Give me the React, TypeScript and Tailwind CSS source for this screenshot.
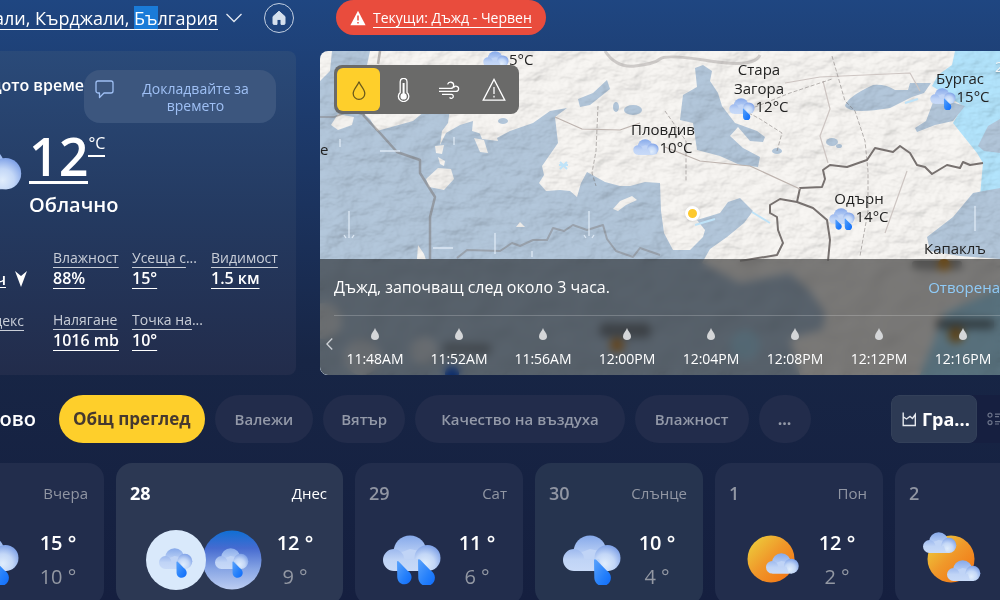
import React, { useState } from "react";

type IconProps = { className?: string };

const CloudShape = () => (
  <>
    <circle cx="27" cy="17" r="16.5" fill="url(#cloudBack)" />
    <path d="M11 20L27 14L46 18V36H11z" fill="#c0d4f6" />
    <circle cx="44.5" cy="23" r="13" fill="url(#cloudRight)" />
    <path d="M11 14A11 11 0 0 0 11 36H40L36 24H21.5A11 11 0 0 0 11 14z" fill="url(#cloudLeft)" />
  </>
);

const Drop = ({ transform }: { transform?: string }) => (
  <path
    transform={transform}
    d="M0 1.5C0 0 1.2-.3 2.2.8L12.6 11.5A8.3 8.3 0 1 1 .3 19z"
    fill="url(#drop)"
  />
);

const CloudIcon = ({ className }: IconProps) => (
  <svg className={className} viewBox="0 0 58 50">
    <CloudShape />
  </svg>
);

const RainIcon = ({ className }: IconProps) => (
  <svg className={className} viewBox="0 0 58 50">
    <CloudShape />
    <Drop transform="translate(31 24)" />
  </svg>
);

const HeavyRainIcon = ({ className }: IconProps) => (
  <svg className={className} viewBox="0 0 58 50">
    <CloudShape />
    <Drop transform="translate(14 26) scale(.86)" />
    <Drop transform="translate(35 24)" />
  </svg>
);

const PartlySunnyIcon = ({ className }: IconProps) => (
  <svg className={className} viewBox="0 0 58 56">
    <circle cx="28" cy="27" r="23.5" fill="url(#sun)" />
    <g transform="translate(23 21) scale(.57)">
      <CloudShape />
    </g>
  </svg>
);

const MostlyCloudyIcon = ({ className }: IconProps) => (
  <svg className={className} viewBox="0 0 58 56">
    <circle cx="28" cy="27" r="23.5" fill="url(#sun)" />
    <g transform="scale(.58)">
      <CloudShape />
    </g>
    <g transform="translate(24 28) scale(.58)">
      <CloudShape />
    </g>
  </svg>
);

const DayNightIcon = ({ className }: IconProps) => (
  <svg className={className} viewBox="0 0 116 60">
    <circle cx="86" cy="30" r="29.5" fill="url(#night)" />
    <circle cx="30" cy="30" r="30" fill="#d9e9fb" />
    <g transform="translate(13 18) scale(.58)">
      <CloudShape />
      <Drop transform="translate(30 23) scale(1.05)" />
    </g>
    <g transform="translate(69 18) scale(.58)">
      <CloudShape />
      <Drop transform="translate(30 23) scale(1.05)" />
    </g>
  </svg>
);

const Gradients = () => (
  <svg className="absolute h-0 w-0" aria-hidden="true">
    <defs>
      <linearGradient id="cloudBack" x1="0" y1="0" x2="0" y2="1">
        <stop offset="0" stopColor="#86a9ea" />
        <stop offset=".6" stopColor="#bdd2f6" />
        <stop offset="1" stopColor="#c3d6f6" />
      </linearGradient>
      <linearGradient id="cloudLeft" x1="0" y1="0" x2="0" y2="1">
        <stop offset="0" stopColor="#9db9ee" />
        <stop offset=".5" stopColor="#c0d4f6" />
        <stop offset="1" stopColor="#c8daf8" />
      </linearGradient>
      <radialGradient id="cloudRight" cx=".4" cy=".72" r=".75">
        <stop offset="0" stopColor="#e0edfc" />
        <stop offset=".5" stopColor="#c3d7f7" />
        <stop offset="1" stopColor="#7b9ee6" />
      </radialGradient>
      <linearGradient id="drop" x1="0" y1="0" x2="1" y2="1">
        <stop offset="0" stopColor="#5aa2fb" />
        <stop offset=".6" stopColor="#2580fb" />
        <stop offset="1" stopColor="#0f6bfa" />
      </linearGradient>
      <linearGradient id="sun" x1=".1" y1=".1" x2=".85" y2=".85">
        <stop offset="0" stopColor="#edc93a" />
        <stop offset=".5" stopColor="#f0982a" />
        <stop offset="1" stopColor="#f27a17" />
      </linearGradient>
      <linearGradient id="night" x1="0" y1="0" x2="0" y2="1">
        <stop offset="0" stopColor="#0f6fd4" />
        <stop offset=".3" stopColor="#466bd0" />
        <stop offset=".65" stopColor="#86a4e4" />
        <stop offset="1" stopColor="#bccdf2" />
      </linearGradient>
    </defs>
  </svg>
);

const SmallDrop = ({ className }: IconProps) => (
  <svg className={className} viewBox="0 0 8 12" fill="#d4d6d8">
    <path d="M4 0C4.6 2.6 8 5.4 8 8.2A4 3.8 0 0 1 0 8.2C0 5.4 3.4 2.6 4 0z" />
  </svg>
);

const Terrain = () => (
  <svg
    className="absolute inset-0 h-full w-full"
    viewBox="0 0 680 324"
    preserveAspectRatio="xMinYMin slice"
  >
    <defs>
      <filter id="relief" x="0" y="0" width="100%" height="100%">
        <feTurbulence type="fractalNoise" baseFrequency=".035 .055" numOctaves="4" seed="8" />
        <feDiffuseLighting lightingColor="#fff" surfaceScale="5">
          <feDistantLight azimuth="225" elevation="58" />
        </feDiffuseLighting>
      </filter>
    </defs>
    <rect width="680" height="324" fill="#f8f6f3" />
    <path d="M635 0H680V324H600L625 262L680 236V150H655L660 145L663 112L657 102L633 72L643 55L612 35L618 24L632 14z" fill="#b3e5fd" />
    <g fill="#b3c7db">
      <path d="M0 30L10 20L12 0H50L47 14L14 40L20 60L43 62L50 68L57 80L93 70L105 60L130 58L128 72L122 80L120 94L126 82L140 74L153 70L152 80L165 84L175 88L190 80L213 72L230 60L247 57L235 66L238 92L222 115L224 124L219 132L226 140L240 139L250 140L257 146L261 132L267 121L285 131L300 135L310 135L325 131L340 132L341 160L344 182L353 199L370 199L383 186L385 179L377 169L400 162L408 151L420 147L433 160L424 172L407 186L390 198L382 212L420 232L470 222L490 240L505 262L503 278L470 288L480 324H0z" />
      <path d="M375 17L383 14L392 20L390 30L398 42L402 55L415 72L437 80L445 86L443 91L430 90L418 76L410 85L423 97L440 106L438 116L420 114L400 105L377 99L373 72L360 69L363 44L377 36z" />
      <path d="M525 55Q527 46 553 34Q566 33 575 39H588L590 32H611L604 42L592 46L570 57Q530 64 525 55z" />
      <path d="M615 46L645 55L633 70L615 74L597 81L595 77L606 70z" />
      <path d="M287 29L290 38L270 54L260 56L258 48L273 42z" />
      <ellipse cx="296" cy="56" rx="3" ry="5" />
      <ellipse cx="313" cy="59" rx="9" ry="5" />
      <ellipse cx="183" cy="70" rx="5" ry="3" />
      <ellipse cx="512" cy="91" rx="6" ry="4" />
      <ellipse cx="519" cy="95" rx="3" ry="2" />
      <ellipse cx="457" cy="100" rx="5" ry="3" />
      <path d="M607 186L633 166L653 142L680 137V208L640 205L610 200z" />
      <path d="M658 95L668 75L680 68V102L664 100z" />
    </g>
    <g fill="#f4f2ef">
      <path d="M11 74L18 63L34 66L32 74L18 79z" />
      <path d="M106 128L118 117L131 118L134 128L124 139L109 136z" />
      <path d="M115 95L124 94L122 103L116 102z" />
      <path d="M118 106L125 110L124 115L120 113z" />
      <path d="M154 87L164 89L168 102L160 101z" />
      <path d="M173 74L178 90L162 88L158 78z" />
      <path d="M196 176L200 171L205 176z" />
      <path d="M293 158L300 150L312 145L317 149L306 154L298 160z" />
      <path d="M97 208L98 194L104 203L106 209z" />
      <circle cx="4" cy="270" r="18" opacity=".6" />
      <circle cx="42" cy="306" r="18" opacity=".5" />
      <circle cx="104" cy="300" r="14" opacity=".5" />
    </g>
    <rect width="680" height="324" filter="url(#relief)" opacity=".36" className="mix-blend-multiply" />
    <g fill="none" stroke="#77716f" strokeLinejoin="round">
      <path d="M285 0Q296 17 315 15T340 8T390 10T440 4" strokeWidth="3" opacity=".3" />
      <path d="M60 0L58 13M43 64L60 82L77 101L100 109L100 122L115 146L110 166V208" strokeWidth="2.5" opacity=".5" />
      <path d="M0 66H14L30 60L45 64" strokeWidth="1.5" opacity=".5" />
      <path d="M137 207L147 199L180 200L192 192L200 195L213 189L227 189L233 177L244 180L253 174L267 179L283 174L287 188L296 200L313 206L320 197L340 204" strokeWidth="2" opacity=".4" />
      <path
        d="M477 151L480 137L502 136L505 128L503 119L510 114L527 116L547 109L555 97L573 101L580 95L590 102L597 114L605 116L612 123L627 114L640 117L643 111L650 114L663 112"
        strokeWidth="2"
      />
      <path d="M477 151L460 148L450 154L450 162L457 166L458 179L463 192L457 204L420 210M477 151L493 157L507 169L510 189L508 210" strokeWidth="2" />
      <path d="M235 66L262 78L300 79L320 72M480 138L430 115L380 110L345 96" stroke="#bdb3ae" strokeWidth="1.2" />
      <path d="M465 32L500 26L590 22L600 40M503 30L510 58L500 85L508 112M587 120L565 182" stroke="#cdc5c2" strokeWidth="1.2" />
      <path
        d="M278 55L276 100L272 122L276 135M345 60L366 90V130M512 5L525 50L535 60L545 90L548 120L548 160L540 205M457 100L462 82L440 68L425 60L470 42L512 28"
        strokeDasharray="4 2"
        opacity=".5"
      />
    </g>
    <g stroke="#e6f0fa" strokeWidth="1.3" opacity=".85" fill="none">
      <path d="M29 160V185M24 184L26 187M29 182V187M34 184L32 187M269 160V185M264 184L266 187M274 184L272 187M175 182V203M134 86V94M60 100H80M113 197H133M20 88V96M212 200V206M655 155V180" />
    </g>
    <path d="M375 174L395 168M432 161L450 172M585 52L598 48M240 111L247 118M247 111L240 118M239 114H248" stroke="#bfe3f8" strokeWidth="2" fill="none" />
    <rect x="592" y="210" width="50" height="8" rx="3" fill="#555" opacity=".6" />
    <circle cx="624" cy="214" r="6" fill="#d08a20" />
    <rect x="280" y="272" width="50" height="14" rx="4" fill="#444" opacity=".5" />
    <circle cx="297" cy="294" r="7" fill="#c88a3a" />
    <rect x="123" y="292" width="48" height="12" rx="4" fill="#444" opacity=".35" />
    <rect x="616" y="268" width="58" height="10" rx="3" fill="#333" opacity=".6" />
    <circle cx="636" cy="284" r="8" fill="#b88838" />
    <circle cx="132" cy="322" r="7" fill="#1458d8" />
    <circle cx="425" cy="294" r="15" fill="#a4d8f2" opacity=".6" />
  </svg>
);

const layers = [
  {
    name: "Валежи",
    icon: <path d="M12 3.5C12.6 7 17.8 11 17.8 15.4A5.8 6 0 0 1 6.2 15.4C6.2 11 11.4 7 12 3.5z" />,
  },
  {
    name: "Температура",
    icon: (
      <>
        <path d="M8.2 14.4V3.8A3.4 3.4 0 0 1 15 3.8V14.4A5.2 5.2 0 1 1 8.2 14.4z" />
        <path d="M11.6 5V17" strokeWidth="2" />
        <circle cx="11.6" cy="18.4" r="2.5" fill="currentColor" />
      </>
    ),
  },
  {
    name: "Вятър",
    icon: (
      <path d="M2 10.4H13.6A3.1 3.1 0 1 0 10.6 6.4M2 13.4H19A2.6 2.6 0 1 0 16.6 9.8M5 16.4H14.2A2 2 0 1 1 12.6 19.4" />
    ),
  },
  {
    name: "Предупреждения",
    icon: <path d="M12 1.4L22.8 22.2H1.2zM12 9V16M12 17.8V19.4" />,
  },
];

const cities = [
  { name: "Пловдив", temp: "10°C", Icon: CloudIcon, place: "left-[343px] top-[69px]" },
  { name: "Стара Загора", temp: "12°C", Icon: RainIcon, place: "left-[439px] top-[9px]" },
  { name: "Бургас", temp: "15°C", Icon: RainIcon, place: "left-[640px] top-[18px]" },
  { name: "Одърн", temp: "14°C", Icon: HeavyRainIcon, place: "left-[539px] top-[138px]" },
];

const times = ["11:48AM", "11:52AM", "11:56AM", "12:00PM", "12:04PM", "12:08PM", "12:12PM", "12:16PM"];

const details = [
  { label: "Влажност", value: "88%" },
  { label: "Усеща с", more: true, value: "15°" },
  { label: "Видимост", value: "1.5 км" },
  { label: "Налягане", value: "1016 mb" },
  { label: "Точка на", more: true, value: "10°" },
];

const tabs = [
  { name: "Общ преглед", pad: "px-[14px]" },
  { name: "Валежи", pad: "px-5" },
  { name: "Вятър", pad: "px-[18px]" },
  { name: "Качество на въздуха", pad: "px-[26px]" },
  { name: "Влажност", pad: "px-5" },
];

const days = [
  { date: "29", day: "Сат", high: 11, low: 6, Icon: HeavyRainIcon, box: "h-[50px] w-[58px]", bg: "bg-[#222d4c]" },
  { date: "30", day: "Слънце", high: 10, low: 4, Icon: RainIcon, box: "h-[50px] w-[58px]", bg: "bg-[#26344f]" },
  { date: "1", day: "Пон", high: 12, low: 2, Icon: PartlySunnyIcon, box: "h-[56px] w-[58px]", bg: "bg-[#222d4c]" },
  { date: "2", day: "", high: null, low: null, Icon: MostlyCloudyIcon, box: "h-[56px] w-[58px]", bg: "bg-[#222d4c]" },
];

const Temps = ({ high, low }: { high: number; low: number }) => (
  <div className="flex w-16 flex-col items-center gap-[6px] text-xl leading-7">
    <span className="font-semibold text-white">{high} °</span>
    <span className="text-[#9398a3]">{low} °</span>
  </div>
);

const Header = () => (
  <header className="flex h-[51px] items-start">
    <div className="flex w-[296px] shrink-0 items-center justify-end gap-2 pt-[3px]">
      <a href="#location" className="whitespace-nowrap text-lg text-white underline underline-offset-4">
        али, Кърджали, <mark className="bg-[#1a7bd8] text-white">Бъ</mark>лгария
      </a>
      <button aria-label="Избор на място">
        <svg className="h-5 w-4" viewBox="0 0 16 20" fill="none" stroke="#e3e9f2" strokeWidth="1.3">
          <path d="M.5 6L8 13.5L15.5 6" />
        </svg>
      </button>
      <button
        aria-label="Начало"
        className="ml-[14px] mr-[2px] flex h-[30px] w-[30px] shrink-0 items-center justify-center rounded-full border border-[#c3d0e2]"
      >
        <svg className="h-4 w-4" viewBox="0 0 16 16" fill="#d5e0ee">
          <path d="M8 1.2L14 6.6V13.4A1 1 0 0 1 13 14.4H10V9.4H6V14.4H3A1 1 0 0 1 2 13.4V6.6z" strokeLinejoin="round" stroke="#d5e0ee" />
        </svg>
      </button>
    </div>
    <a
      href="#alert"
      className="ml-10 flex h-[35px] items-center gap-[7px] rounded-full bg-[#e94c3d] px-[14px] text-sm text-white"
    >
      <svg className="h-4 w-4" viewBox="0 0 16 16">
        <path d="M8 .8L15.6 15.2H.4z" fill="#fff" />
        <path d="M8 5.5V10.5M8 12V13.6" stroke="#e94c3d" strokeWidth="1.5" />
      </svg>
      <span className="whitespace-nowrap underline underline-offset-4">Текущи: Дъжд - Червен</span>
    </a>
  </header>
);

const CurrentWeather = () => (
  <section className="w-[296px] shrink-0 overflow-hidden rounded-r-lg bg-linear-to-b from-[#2a4a79] via-[#243a61] via-50% to-[#222c4b] pt-[19px]">
    <div className="flex">
      <div className="flex w-[84px] shrink-0 justify-end overflow-hidden pt-[3px]">
        <h2 className="whitespace-nowrap text-base font-semibold text-white">щото време</h2>
      </div>
      <button className="flex h-[53px] w-48 items-start rounded-2xl bg-[#3c567e] px-[11px] pt-[10px] text-[#9fc0f5]">
        <svg className="h-[19px] w-[19px] shrink-0" viewBox="0 0 19 19" fill="none" stroke="currentColor" strokeWidth="1.3">
          <path d="M3 1H16A2 2 0 0 1 18 3V11A2 2 0 0 1 16 13H9L4.5 17.5V13H3A2 2 0 0 1 1 11V3A2 2 0 0 1 3 1z" strokeLinejoin="round" />
        </svg>
        <span className="flex-1 pl-3 text-center text-sm leading-[17px]">Докладвайте за времето</span>
      </button>
    </div>

    <div className="flex pt-2">
      <div className="flex w-[29px] shrink-0 justify-end overflow-hidden pr-[7px] pt-[15px]">
        <CloudIcon className="h-[60px] w-[70px] shrink-0" />
      </div>
      <div>
        <a href="#temperature" className="flex text-white">
          <span className="border-b-[3px] border-white text-[52px] font-semibold leading-[50px]">12</span>
          <span className="self-start border-b-2 border-white text-base leading-6">°C</span>
        </a>
        <p className="pt-[7px] text-xl font-semibold leading-7 text-white">Облачно</p>
      </div>
    </div>

    <div className="flex pt-[29px]">
      <div className="flex w-[53px] shrink-0 flex-col overflow-hidden">
        <div className="mt-[21px] flex items-center">
          <span className="flex w-[6px] justify-end overflow-hidden text-base font-semibold leading-5 text-white underline underline-offset-2">ч</span>
          <svg className="ml-[9px] h-4 w-3" viewBox="0 0 12 16" fill="#fff">
            <path d="M0 0L6 5L12 0L6 16z" />
          </svg>
        </div>
        <span className="mt-[22px] flex w-6 justify-end text-sm leading-5 text-[#c9ced8] underline underline-offset-4">декс</span>
      </div>
      <dl className="grid grid-cols-[79px_79px_79px] gap-y-[22px]">
        {details.map((d) => (
          <div key={d.label}>
            <dt className="whitespace-nowrap text-sm leading-5 text-[#c9ced8]">
              <span className="underline underline-offset-4">{d.label}</span>
              {d.more && "..."}
            </dt>
            <dd className="whitespace-nowrap text-base font-semibold leading-5 text-white underline underline-offset-4">{d.value}</dd>
          </div>
        ))}
      </dl>
    </div>
  </section>
);

const WeatherMap = () => {
  const [layer, setLayer] = useState("Валежи");

  return (
    <section className="relative flex min-w-0 flex-1 flex-col overflow-hidden rounded-l-lg">
      <Terrain />

      {cities.map(({ name, temp, Icon, place }) => (
        <div key={name} className={`absolute w-0 ${place}`}>
          <div className="flex w-20 -translate-x-1/2 flex-col items-center">
            <span className="text-center text-[15px] leading-[19px] text-[#222]">{name}</span>
            <span className="flex items-start whitespace-nowrap text-[15px] leading-4 text-[#222]">
              <Icon className="h-[22px] w-[26px]" />
              {temp}
            </span>
          </div>
        </div>
      ))}
      <span className="absolute left-[163px] top-0 flex items-start text-[15px] leading-4 text-[#222]">
        <CloudIcon className="h-[22px] w-[26px]" />
        5°C
      </span>
      <span className="absolute left-0 top-[88px] text-[15px] leading-5 text-[#222]">е</span>
      <span className="absolute left-[604px] top-[187px] text-[15px] leading-5 text-[#222]">Капаклъ</span>
      <span className="absolute left-[675px] top-[5px] text-[15px] leading-5 text-[#f4f6f8] text-shadow-md">2</span>
      <span className="absolute left-[365px] top-[155px] h-[15px] w-[15px] rounded-full border-[3px] border-white bg-[#fdc92e] shadow" />

      <div className="relative h-[208px] p-[14px]">
        <div className="flex w-[185px] justify-between rounded-lg bg-[#6a6a69] p-[3px]">
          {layers.map(({ name, icon }) => (
            <button
              key={name}
              aria-label={name}
              onClick={() => setLayer(name)}
              className={`flex h-[43px] w-[43px] items-center justify-center rounded-md ${
                layer === name ? "bg-[#fecf2b] text-[#6b5a1c]" : "text-white"
              }`}
            >
              <svg className="h-6 w-6" viewBox="0 0 24 24" fill="none" stroke="currentColor" strokeWidth="1.3">
                {icon}
              </svg>
            </button>
          ))}
        </div>
      </div>

      <div className="relative flex-1 bg-black/50 backdrop-blur-xs">
        <div className="flex h-14 items-center justify-between pl-[14px]">
          <p className="whitespace-nowrap text-base text-white">Дъжд, започващ след около 3 часа.</p>
          <a href="#map" className="text-[15px] text-[#8fcbf8]">
            Отворена
          </a>
        </div>
        <div className="ml-[14px] border-t border-white/20" />
        <div className="flex pt-3">
          <button aria-label="Назад" className="mt-1 flex h-6 w-[13px] items-center justify-end">
            <svg className="h-3 w-[7px] shrink-0" viewBox="0 0 8 14" fill="none" stroke="#cfd3d8" strokeWidth="1.5">
              <path d="M7.2 .6L1 7L7.2 13.4" />
            </svg>
          </button>
          <ul className="flex min-w-0 flex-1 overflow-hidden">
            {times.map((time) => (
              <li key={time} className="flex w-[84px] shrink-0 flex-col items-center gap-[9px]">
                <SmallDrop className="h-3 w-2" />
                <span className="text-sm leading-5 text-white">{time}</span>
              </li>
            ))}
          </ul>
        </div>
      </div>
    </section>
  );
};

const App = () => {
  const [tab, setTab] = useState("Общ преглед");

  return (
    <div className="h-screen overflow-hidden bg-linear-to-b from-[#1f4681] via-[#172545] via-60% to-[#151f3f] font-['Open_Sans','Noto_Sans',sans-serif]">
      <Gradients />
      <Header />

      <main>
        <div className="flex h-[324px] gap-6">
          <CurrentWeather />
          <WeatherMap />
        </div>

        <div className="flex items-center pt-5">
          <div className="flex w-9 shrink-0 justify-end overflow-hidden">
            <h2 className="text-xl font-semibold text-white">ово</h2>
          </div>
          <div className="ml-[23px] flex gap-[10px]">
            {tabs.map(({ name, pad }) => (
              <button
                key={name}
                onClick={() => setTab(name)}
                className={`h-12 whitespace-nowrap rounded-full ${pad} ${
                  tab === name
                    ? "bg-[#fecf2b] text-[17px] font-bold text-[#46392f]"
                    : "bg-[#222c4b] text-[15px] font-semibold text-[#9399a8]"
                }`}
              >
                {name}
              </button>
            ))}
            <button className="h-12 w-[52px] rounded-full bg-[#222c4b] text-base font-bold text-[#9399a8]">...</button>
          </div>
          <div className="ml-auto flex w-[109px] shrink-0 items-center overflow-hidden rounded-l-lg bg-[#161f40]">
            <button className="flex h-12 w-[86px] shrink-0 items-center gap-[5px] rounded-lg border border-[#334059] bg-[#2d3a54] px-[10px] text-lg font-bold text-white">
              <svg className="h-[15px] w-[15px] shrink-0" viewBox="0 0 15 15" fill="none" stroke="#e6e9ee" strokeWidth="1.4">
                <path d="M1.2 .5V13.5H14M1.5 5L4.5 7L8 4.5L10.5 6.5L13.3 2.5V13" />
              </svg>
              Гра...
            </button>
            <button aria-label="Списък" className="h-12 w-6 shrink-0 pl-[10px]">
              <svg className="h-[14px] w-[14px]" viewBox="0 0 14 14" fill="none" stroke="#6c748a" strokeWidth="1.2">
                <circle cx="3" cy="3.2" r="2" />
                <circle cx="3" cy="10.6" r="2" />
                <path d="M8 2.2H14M8 4.6H12M8 9.6H14M8 12H12" />
              </svg>
            </button>
          </div>
        </div>

        <div className="flex gap-3 pt-5">
          <article className="flex h-[142px] w-[104px] shrink-0 flex-col overflow-hidden rounded-r-2xl bg-[#222d4c] pt-[18px]">
            <h3 className="pr-4 text-right text-[15px] leading-6 text-[#9196a3]">Вчера</h3>
            <div className="flex items-center justify-between pr-[14px] pt-6">
              <div className="flex w-[19px] justify-end overflow-hidden">
                <RainIcon className="h-[50px] w-[58px] shrink-0" />
              </div>
              <Temps high={15} low={10} />
            </div>
          </article>

          <article className="h-[142px] w-[227px] shrink-0 rounded-2xl bg-[#2c3853] pt-[18px]">
            <div className="flex items-center justify-between pl-[14px] pr-4 text-white">
              <span className="text-lg font-bold leading-6">28</span>
              <h3 className="text-[15px] leading-6">Днес</h3>
            </div>
            <div className="flex items-center justify-between pl-[30px] pr-4 pt-6">
              <DayNightIcon className="h-[60px] w-[116px]" />
              <Temps high={12} low={9} />
            </div>
          </article>

          {days.map(({ date, day, high, low, Icon, box, bg }) => (
            <article key={date} className={`h-[142px] w-[168px] shrink-0 rounded-2xl pt-[18px] ${bg}`}>
              <div className="flex items-center justify-between pl-[14px] pr-4 text-[#9196a3]">
                <span className="text-lg font-semibold leading-6">{date}</span>
                <h3 className="text-[15px] leading-6">{day}</h3>
              </div>
              <div className="flex h-[86px] items-center justify-between pl-7 pr-[14px] pt-6">
                <Icon className={box} />
                {high !== null && low !== null && <Temps high={high} low={low} />}
              </div>
            </article>
          ))}
        </div>
      </main>
    </div>
  );
};

export default App;
